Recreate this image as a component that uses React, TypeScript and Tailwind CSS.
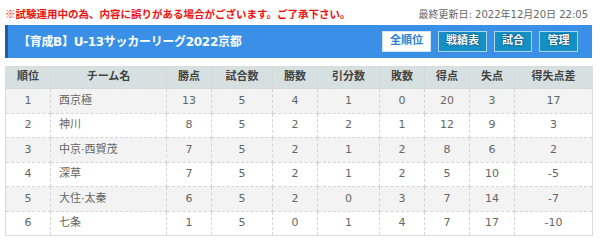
import React from 'react';

interface Row {
  rank: number;
  team: string;
  pts: number;
  played: number;
  won: number;
  drawn: number;
  lost: number;
  gf: number;
  ga: number;
  gd: number;
}

const rows: Row[] = [
  { rank: 1, team: '西京極', pts: 13, played: 5, won: 4, drawn: 1, lost: 0, gf: 20, ga: 3, gd: 17 },
  { rank: 2, team: '神川', pts: 8, played: 5, won: 2, drawn: 2, lost: 1, gf: 12, ga: 9, gd: 3 },
  { rank: 3, team: '中京·西賀茂', pts: 7, played: 5, won: 2, drawn: 1, lost: 2, gf: 8, ga: 6, gd: 2 },
  { rank: 4, team: '深草', pts: 7, played: 5, won: 2, drawn: 1, lost: 2, gf: 5, ga: 10, gd: -5 },
  { rank: 5, team: '大住·太秦', pts: 6, played: 5, won: 2, drawn: 0, lost: 3, gf: 7, ga: 14, gd: -7 },
  { rank: 6, team: '七条', pts: 1, played: 5, won: 0, drawn: 1, lost: 4, gf: 7, ga: 17, gd: -10 },
];

const headers = ['順位', 'チーム名', '勝点', '試合数', '勝数', '引分数', '敗数', '得点', '失点', '得失点差'];
const widths = ['w-[45px]', 'w-[116px]', 'w-[45px]', 'w-[61px]', 'w-[45px]', 'w-[62px]', 'w-[45px]', 'w-[45px]', 'w-[45px]', 'w-[78px]'];

const cell = 'border border-dashed border-[#d4d4d4] text-center';

export default function App() {
  return (
    <div className="w-[600px] h-[241px] bg-white font-['DejaVu_Sans','Noto_Sans_CJK_JP',sans-serif] text-[#555]">
      <div className="flex h-[25px] items-center justify-between pl-[5px] pr-[12px] pt-[3px]">
        <p className="text-[10.5px] font-bold text-[#f01010] font-['Noto_Sans_CJK_JP',sans-serif]">
          ※試験運用中の為、内容に誤りがある場合がございます。ご了承下さい。
        </p>
        <p className="text-[10px] text-[#666]">最終更新日: 2022年12月20日 22:05</p>
      </div>

      <div className="ml-[5px] mr-[8px] flex h-[33px] items-center justify-between border-l-[3px] border-[#1d5fa6] bg-[#3990e6] pl-[10px] pr-[14px]">
        <h1 className="text-[12px] font-bold tracking-[-0.3px] text-white">【育成B】U-13サッカーリーグ2022京都</h1>
        <div className="flex gap-[7px] text-[11px] font-bold">
          <button className="h-[21px] w-[49px] border border-[#cfe3f7] bg-white text-[#2a7fd4]">全順位</button>
          <button className="h-[21px] w-[49px] border border-[#a9d6ee] bg-[#1490c4] text-white [text-shadow:0_0_2px_#024]">戦績表</button>
          <button className="h-[21px] w-[38px] border border-[#a9d6ee] bg-[#1490c4] text-white [text-shadow:0_0_2px_#024]">試合</button>
          <button className="h-[21px] w-[39px] border border-[#a9d6ee] bg-[#1490c4] text-white [text-shadow:0_0_2px_#024]">管理</button>
        </div>
      </div>

      <div className="ml-[5px] mr-[8px] mt-[8px]">
        <table className="w-[587px] table-fixed border-collapse border border-[#dcdcdc] text-[11px] text-[#666]">
          <colgroup>
            {widths.map((w, i) => (
              <col key={i} className={w} />
            ))}
          </colgroup>
          <thead>
            <tr className="h-[22px] bg-[#d6e0e0] text-[#444]">
              {headers.map((h) => (
                <th key={h} className={`${cell} font-bold`}>
                  {h}
                </th>
              ))}
            </tr>
          </thead>
          <tbody>
            {rows.map((r, i) => (
              <tr key={r.rank} className={`h-[24.5px] ${i % 2 === 0 ? 'bg-[#f3f3f3]' : 'bg-white'}`}>
                <td className={cell}>{r.rank}</td>
                <td className="border border-dashed border-[#d4d4d4] pl-[8px] text-left">{r.team}</td>
                <td className={cell}>{r.pts}</td>
                <td className={cell}>{r.played}</td>
                <td className={cell}>{r.won}</td>
                <td className={cell}>{r.drawn}</td>
                <td className={cell}>{r.lost}</td>
                <td className={cell}>{r.gf}</td>
                <td className={cell}>{r.ga}</td>
                <td className={cell}>{r.gd}</td>
              </tr>
            ))}
          </tbody>
        </table>
      </div>
    </div>
  );
}
